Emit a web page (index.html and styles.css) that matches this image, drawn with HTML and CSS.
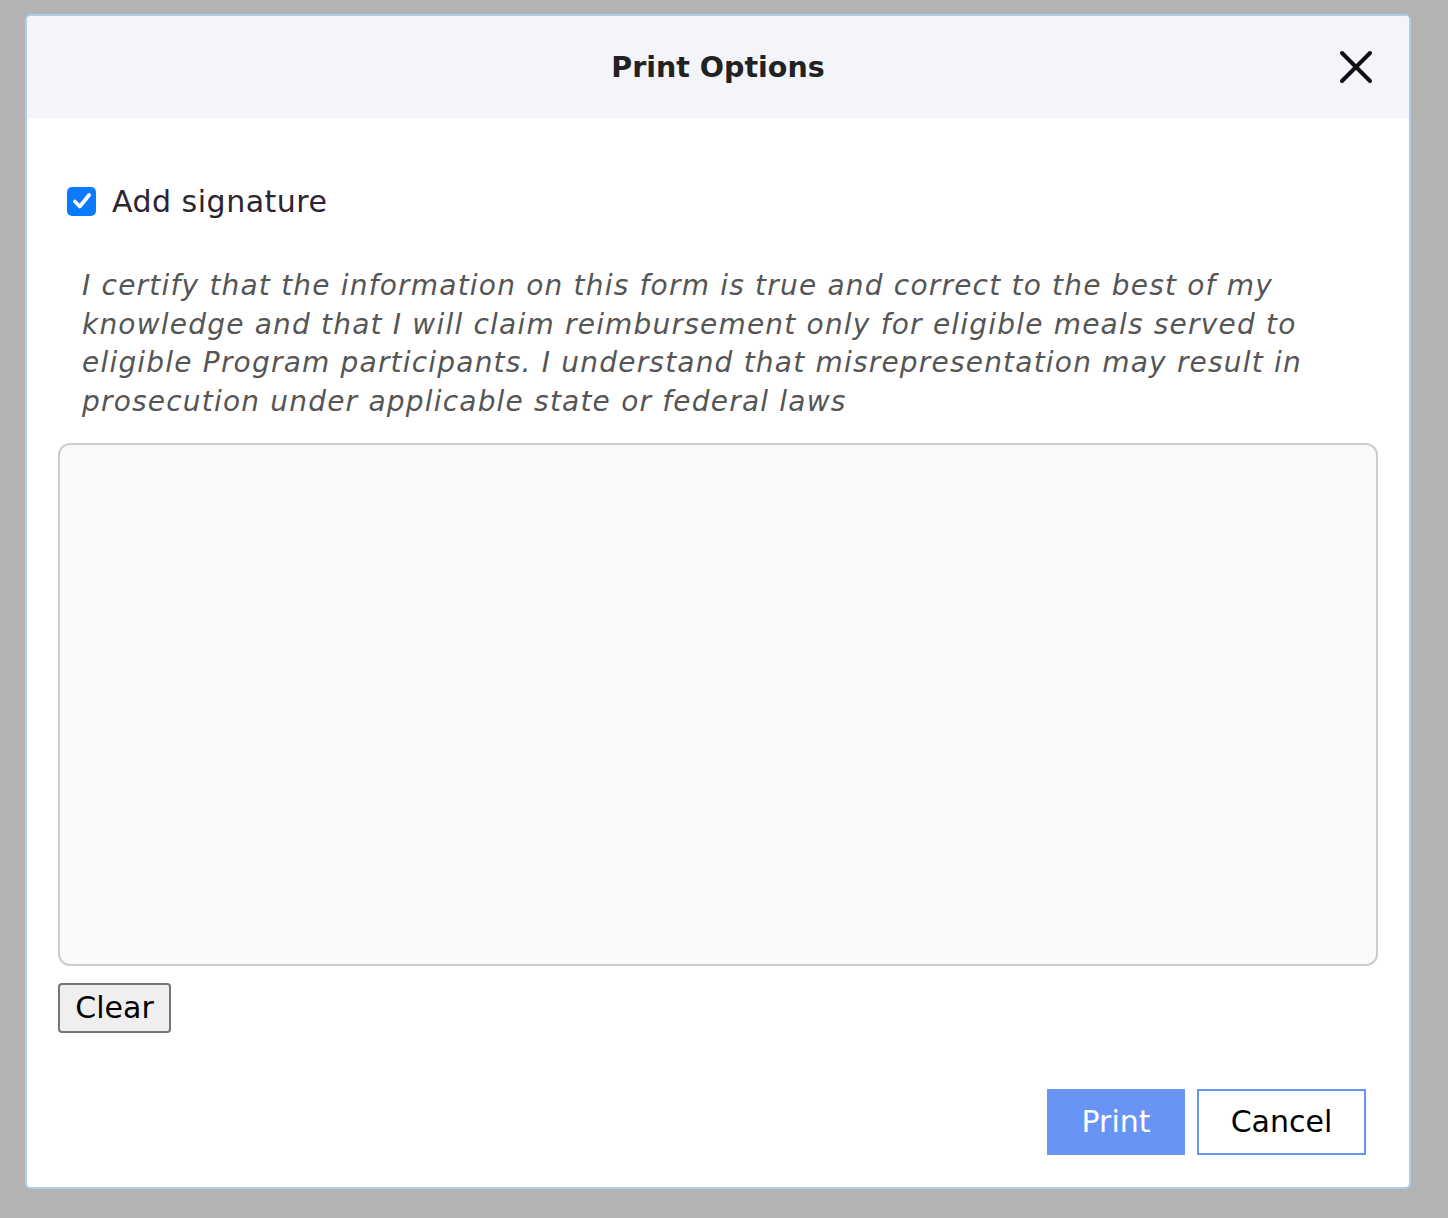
FILE: index.html
```html
<!DOCTYPE html>
<html>
<head>
<meta charset="utf-8">
<link rel="stylesheet" href="styles.css">
</head>
<body>
<div class="dialog">
  <div class="header">
    <h1 class="title">Print Options</h1>
    <button class="close" aria-label="Close">
      <svg width="34" height="34" viewBox="0 0 34 34"><path d="M3 3 L31 31 M31 3 L3 31" stroke="#111" stroke-width="4" stroke-linecap="round" fill="none"/></svg>
    </button>
  </div>
  <div class="content">
    <label class="check-row">
      <span class="checkbox">
        <svg width="22" height="22" viewBox="0 0 20 20"><path d="M3.5 10.5 L8 15 L16.5 4.5" stroke="#fff" stroke-width="3.4" stroke-linecap="round" stroke-linejoin="round" fill="none"/></svg>
      </span>
      <span class="check-label">Add signature</span>
    </label>
    <p class="certify">I certify that the information on this form is true and correct to the best of my knowledge and that I will claim reimbursement only for eligible meals served to eligible Program participants. I understand that misrepresentation may result in prosecution under applicable state or federal laws</p>
    <div class="sig-pad"></div>
    <div class="clear-row"><button class="clear">Clear</button></div>
    <div class="actions">
      <button class="btn btn-primary">Print</button>
      <button class="btn btn-outline">Cancel</button>
    </div>
  </div>
</div>
</body>
</html>
```
FILE: styles.css
```css
html, body {
  margin: 0;
  padding: 0;
  background: #b3b3b3;
  font-family: "DejaVu Sans", "Liberation Sans", sans-serif;
}
body {
  padding: 14px 0 0 25px;
  height: 1218px;
  box-sizing: border-box;
}
.dialog {
  width: 1386px;
  height: 1175px;
  box-sizing: border-box;
  border: 2px solid #abcfec;
  border-radius: 6px;
  background: #fff;
  display: flex;
  flex-direction: column;
  overflow: hidden;
}
.header {
  height: 102px;
  flex: none;
  background: #f4f5fa;
  display: flex;
  align-items: center;
  justify-content: center;
  position: relative;
}
.title {
  margin: 0;
  font-size: 28.5px;
  font-weight: bold;
  color: #222;
}
.close {
  position: absolute;
  right: 36px;
  top: 34px;
  background: none;
  border: 0;
  padding: 0;
  width: 34px;
  height: 34px;
  display: flex;
}
.content {
  flex: 1;
  display: flex;
  flex-direction: column;
  padding: 0 31px 0 31px;
}
.check-row {
  display: flex;
  align-items: center;
  gap: 16px;
  margin: 68px 0 0 9px;
  height: 30px;
}
.checkbox {
  width: 29px;
  height: 29px;
  border-radius: 5px;
  background: #0a7aff;
  display: flex;
  align-items: center;
  justify-content: center;
  flex: none;
}
.check-label {
  font-size: 30px;
  letter-spacing: 0.5px;
  color: #2b2530;
}
.certify {
  margin: 51px 0 0 24px;
  font-size: 28px;
  font-style: italic;
  line-height: 38.7px;
  letter-spacing: 1.2px;
  color: #555;
  width: 1240px;
}
.sig-pad {
  margin-top: 21px;
  height: 523px;
  box-sizing: border-box;
  border: 2px solid #cccccc;
  border-radius: 12px;
  background: #f9f9f9;
}
.clear-row {
  margin-top: 17px;
  display: flex;
}
.clear {
  width: 113px;
  height: 50px;
  box-sizing: border-box;
  border: 2px solid #767676;
  border-radius: 4px;
  background: #efefef;
  font-family: inherit;
  font-size: 30px;
  color: #000;
  padding: 0;
}
.actions {
  margin-top: 56px;
  display: flex;
  justify-content: flex-end;
  gap: 12px;
  padding-right: 12px;
}
.btn {
  height: 66px;
  box-sizing: border-box;
  font-family: inherit;
  font-size: 30px;
  padding: 0;
}
.btn-primary {
  width: 138px;
  background: #6794f5;
  color: #fff;
  border: 0;
}
.btn-outline {
  width: 169px;
  background: #fff;
  color: #000;
  border: 2px solid #6794f5;
}
```
